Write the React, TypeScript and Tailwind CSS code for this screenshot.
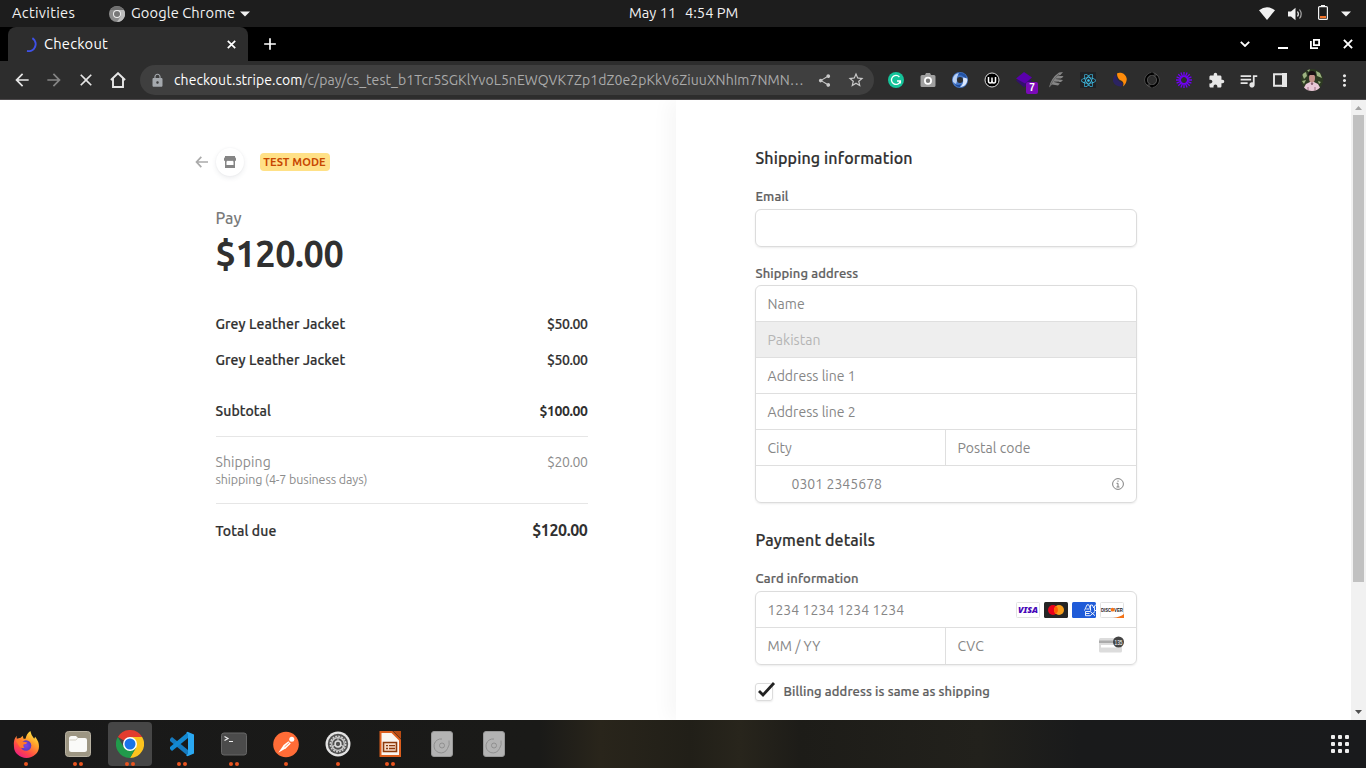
import type { ReactNode } from "react";
import {
  MdAdd,
  MdArrowBack,
  MdArrowForward,
  MdClose,
  MdExtension,
  MdLock,
  MdMoreVert,
  MdQueueMusic,
  MdShare,
  MdStarBorder,
} from "react-icons/md";
import { FaReact } from "react-icons/fa";

/* A single line of text that never wraps. */
function Line({ className = "", children }: { className?: string; children: string }) {
  return <span className={`block shrink-0 whitespace-pre ${className}`}>{children}</span>;
}

function SystemBar() {
  return (
    <header className="flex h-[27px] shrink-0 items-center bg-[#1d1d1d] text-[14.67px] leading-[25px] text-[#f2f2f2]">
      <Line className="ml-3 h-[27px] w-[63px] tracking-[.3px]">Activities</Line>
      <svg className="ml-[34px]" width="16" height="16" viewBox="0 0 16 16">
        <circle cx="8" cy="8" r="8" fill="#8b8b8b" />
        <path d="M8 4h7A8 8 0 0 1 8 16l4-6z" fill="#bdbdbd" />
        <path d="M1.3 4A8 8 0 0 1 15 4H8z" fill="#6f6f6f" />
        <circle cx="8" cy="8" r="4" fill="#eee" />
        <circle cx="8" cy="8" r="3" fill="#777" />
      </svg>
      <Line className="ml-1.5 h-[27px] w-[105px] tracking-[.1px]">Google Chrome</Line>
      <svg className="ml-1" width="10" height="6" viewBox="0 0 10 6"><path d="M0 .5h10L5 5.5z" fill="#f2f2f2" /></svg>
      <div className="ml-[379px] flex h-[27px]">
        <Line className="w-[56px]">May 11</Line>
        <Line className="w-[54px]">4:54 PM</Line>
      </div>
      <div className="ml-auto flex items-center pr-[15px]">
        <svg width="16" height="13" viewBox="0 0 16 13"><path d="M0 3.2Q8-2.6 16 3.2L8 13z" fill="#f2f2f2" /></svg>
        <svg className="ml-[13px]" width="16" height="14" viewBox="0 0 16 14">
          <path d="M0 4.5h3L7.5.8v12.4L3 9.5H0z" fill="#f2f2f2" />
          <path d="M9.5 4.5q1.7 2.5 0 5" stroke="#f2f2f2" strokeWidth="1.2" fill="none" />
          <path d="M11.5 2.5q3.4 4.5 0 9" stroke="#a8a8a8" strokeWidth="1.2" fill="none" />
        </svg>
        <svg className="mb-0.5 ml-[13px]" width="12" height="16" viewBox="0 0 12 16">
          <path d="M4 0h4v2H4z" fill="#f2f2f2" />
          <rect x="1.6" y="1.6" width="8.8" height="12.8" rx="1" fill="none" stroke="#f2f2f2" strokeWidth="1.2" />
          <path d="M3 11h6v2.2H3z" fill="#f37329" />
        </svg>
        <svg className="ml-3" width="10" height="6" viewBox="0 0 10 6"><path d="M0 .5h10L5 5.5z" fill="#f2f2f2" /></svg>
      </div>
    </header>
  );
}

function TabStrip() {
  return (
    <div className="flex h-[34px] shrink-0 items-center bg-black pl-2 text-white">
      <div className="flex h-full w-[240px] items-center rounded-t-lg bg-[#2d2d2d] pr-3 text-[14.67px] leading-[34px]">
        <svg className="ml-3.5" width="16" height="16" viewBox="0 0 16 16">
          <path d="M10.4 2.2A7 7 0 0 1 5 14.9" fill="none" stroke="#3f51e8" strokeWidth="2" />
        </svg>
        <Line className="ml-1.5 tracking-[.25px]">Checkout</Line>
        <svg className="ml-auto" width="9" height="9" viewBox="0 0 9 9"><path d="M.8.8l7.400 7.400M8.200.8.8 8.200" fill="none" stroke="#fff" strokeWidth="1.700" /></svg>
      </div>
      <MdAdd className="ml-3" size={20} />
      <svg className="ml-auto" width="10" height="6" viewBox="0 0 10 6"><path d="M.8.8 5 5 9.200.8" fill="none" stroke="#fff" strokeWidth="1.8" /></svg>
      <svg className="mt-2 ml-7" width="10" height="2"><path d="M0 0h10v2H0z" fill="#fff" /></svg>
      <svg className="ml-[22px]" width="10" height="10" viewBox="0 0 10 10">
        <path d="M3.900.9H9.100v5.200H3.900z" fill="none" stroke="#fff" strokeWidth="1.8" />
        <path d="M.9 2v7.100H8" fill="none" stroke="#fff" strokeWidth="1.8" />
      </svg>
      <svg className="mr-[13px] ml-[23px]" width="10" height="10" viewBox="0 0 10 10"><path d="M.9.900l8.200 8.200M9.100.9.9 9.100" fill="none" stroke="#fff" strokeWidth="1.9" /></svg>
    </div>
  );
}

function Cell({ children }: { children: ReactNode }) {
  return <div className="flex h-full w-8 shrink-0 items-center justify-center">{children}</div>;
}

function Extensions() {
  return (
    <>
      <Cell>
        <svg width="16" height="16" viewBox="0 0 16 16">
          <circle cx="8" cy="8" r="8" fill="#15c39a" />
          <path d="M11.4 5A4.500 4.500 0 1 0 12.300 9.200M9 9h3.400v2.500" fill="none" stroke="#fff" strokeWidth="1.3" />
        </svg>
      </Cell>
      <Cell>
        <svg width="16" height="14" viewBox="0 0 16 14">
          <path d="M5 2l1-2h4l1 2h3a1.500 1.500 0 0 1 1.500 1.500v9A1.500 1.500 0 0 1 14 14H2a1.500 1.500 0 0 1-1.500-1.500v-9A1.500 1.500 0 0 1 2 2z" fill="#a0a0a0" />
          <circle cx="8" cy="7.800" r="3.100" fill="#777" stroke="#fff" strokeWidth="1.800" />
        </svg>
      </Cell>
      <Cell>
        <svg width="16" height="16" viewBox="0 0 16 16">
          <circle cx="8" cy="8" r="5.500" fill="none" stroke="#4677c6" strokeWidth="5" />
          <path d="M1 10A7 7 0 0 1 8 1Q4 4 5 9l-1 3z" fill="#b9cff2" />
          <path d="M15 6a7 7 0 0 1-7 9q4-3 3-8l1-3z" fill="#dbe7fb" />
          <path d="M7 .5q7 0 8 6l-3-1q-2-3-6-2z" fill="#2353a5" />
          <path d="M3 12q3 2 6 0l-1 3q-4 0-5-3z" fill="#1c4896" />
        </svg>
      </Cell>
      <Cell>
        <svg width="16" height="16" viewBox="0 0 16 16">
          <circle cx="8" cy="8" r="7" fill="#000" stroke="#ddd" strokeWidth="1" />
          <path d="M4.500 5v4q0 2 1.700 2T8 9V5.500M8 9q0 2 1.800 2t1.700-2V5" fill="none" stroke="#fff" strokeWidth="1.500" />
        </svg>
      </Cell>
      <Cell>
        <div className="relative">
          <svg width="16" height="16" viewBox="0 0 16 16">
            <path d="M0 8.500l8-3 8 3-8 7z" fill="#33106e" />
            <path d="M0 6.500L8 0l8 5.500-7 6z" fill="#5a00ad" />
          </svg>
          <span className="absolute top-2.5 left-2.5 h-3 w-3 rounded-xs bg-[#7b0ab8] text-center font-['Liberation_Sans'] text-[10px] leading-3 font-bold text-white">7</span>
        </div>
      </Cell>
      <Cell>
        <svg width="16" height="16" viewBox="0 0 16 16">
          <path d="M1 15.500Q3 6 11 .5L15 0 12.500 3 9 4 15.500 4 14 6 7.500 7 15 8 13 10 6 10.300 12 11.500 10 13.500 4 12.500z" fill="#858585" />
          <path d="M1.500 15Q5 7 11 2M8 6.500h5M6 9.500h5" fill="none" stroke="#5c5c5c" strokeWidth=".8" />
        </svg>
      </Cell>
      <Cell>
        <div className="flex size-4 items-center justify-center bg-[#202225]"><FaReact size={15} className="text-[#3fc5f0]" /></div>
      </Cell>
      <Cell>
        <svg width="16" height="16" viewBox="0 0 16 16">
          <path d="M4 2Q.5 5 1 9.500 3 14.500 9.500 14.500L11 11Q4 9 4 2z" fill="#2b2362" />
          <path d="M5 1.500q1-1 4-.7Q14 2 14.800 7 14.500 12 11 14.500q1.500-4-1.500-5.700Q5 7 5 1.500z" fill="#ff8c0a" />
        </svg>
      </Cell>
      <Cell>
        <svg width="16" height="16" viewBox="0 0 16 16" fill="none">
          <circle cx="8" cy="8" r="7.200" stroke="#666" strokeWidth=".7" />
          <path d="M3.800 12.200A6 6 0 0 1 8.500 2M12.200 3.800A6 6 0 0 1 7.500 14" stroke="#000" strokeWidth="1.800" />
          <path d="M7.500.5l2 1.500-2 2M8.500 15.500l-2-1.500 2-2" stroke="#000" strokeWidth="1.200" />
          <circle cx="8" cy="8" r="4.600" stroke="#666" strokeWidth=".6" />
        </svg>
      </Cell>
      <Cell>
        <svg width="16" height="16" viewBox="0 0 16 16" fill="none" stroke="#7000f5">
          <path d="M8 0v5M8 11v5M0 8h5M11 8h5M2.300 2.300l3.600 3.600M10.100 10.100l3.600 3.600M2.300 13.700l3.600-3.600M10.100 5.900l3.600-3.600M4.900.6l1.900 4.700M9.200 10.700l1.900 4.700M11.100.6 9.200 5.300M6.800 10.700l-1.900 4.700M.6 4.900l4.700 1.900M10.700 9.200l4.700 1.900M.6 11.100l4.700-1.900M10.700 6.800l4.700-1.900" strokeWidth="1.300" />
          <circle cx="8" cy="8" r="3.800" strokeWidth="1.400" />
        </svg>
      </Cell>
    </>
  );
}

function Avatar() {
  return (
    <svg width="22" height="22" viewBox="0 0 22 22">
      <defs><clipPath id="face"><circle cx="11" cy="11" r="11" /></clipPath></defs>
      <g clipPath="url(#face)">
        <path d="M0 0h22v22H0z" fill="#2d3a22" />
        <path d="M1 5l4-2 1 4-3 3zM15 2l4 2 2 5-5-2zM1 12l4-1-2 4zM17 12l3 1-2 2zM6 1l3-1-1 3z" fill="#9db380" />
        <path d="M1 22l4-7 4-2h4l4 2 4 7z" fill="#e9c8d8" />
        <ellipse cx="11" cy="9" rx="3" ry="4.500" fill="#c4918a" />
        <path d="M7 7q0-5 4-5t4 5l-2-1H9z" fill="#191014" />
        <path d="M10 14l1 2 1-2zM7 18v4M14 18v4" stroke="#9b6c80" />
      </g>
    </svg>
  );
}

function Toolbar() {
  return (
    <div className="flex h-[39px] shrink-0 items-center border-b border-[#4d4a4c] bg-[#2d2d2d] pl-1.5 text-[#e6e6e6]">
      <Cell><MdArrowBack size={20} /></Cell>
      <Cell><MdArrowForward size={20} className="text-[#858585]" /></Cell>
      <Cell><MdClose size={20} /></Cell>
      <Cell>
        <svg width="16" height="16" viewBox="0 0 16 16"><path d="M.9 8 8 1.200 15.100 8M3 6.500v8.500h10V6.500" fill="none" stroke="#e6e6e6" strokeWidth="1.900" /></svg>
      </Cell>
      <div className="ml-1.5 flex h-[30px] w-[734px] items-center rounded-full bg-[#3f3f3f] pr-0.5 pl-2.5 text-[14px] leading-[30px] tracking-[.065px]">
        <MdLock size={15} className="mr-[9px] text-[#a5a9ae]" />
        <Line className="text-white">checkout.stripe.com</Line>
        <Line className="text-[#aaa]">/c/pay/cs_test_b1Tcr5SGKlYvoL5nEWQVK7Zp1dZ0e2pKkV6ZiuuXNhIm7NMN…</Line>
        <div className="ml-auto flex h-full text-[#c9c9c9]">
          <Cell><MdShare size={15} /></Cell>
          <Cell><MdStarBorder size={18} /></Cell>
        </div>
      </div>
      <div className="ml-1.5 flex h-full items-center">
        <Extensions />
        <Cell><MdExtension size={17} /></Cell>
        <Cell><MdQueueMusic size={21} /></Cell>
        <Cell>
          <svg width="14" height="14" viewBox="0 0 14 14"><path d="M1 1.200h12v11.600H1z" fill="none" stroke="#e6e6e6" strokeWidth="1.900" /><path d="M9 0h5v14H9z" fill="#e6e6e6" /></svg>
        </Cell>
        <Cell><Avatar /></Cell>
        <Cell><MdMoreVert size={19} /></Cell>
      </div>
    </div>
  );
}

const strong = "font-medium [-webkit-text-stroke:0.2px]";

function Item({ name, price }: { name: string; price: string }) {
  return (
    <div className={`flex h-9 items-center justify-between ${strong}`}>
      <Line className="tracking-[.1px]">{name}</Line>
      <Line className="tracking-[-.4px]">{price}</Line>
    </div>
  );
}

function Summary() {
  return (
    <section className="w-[675.5px] shrink-0 pt-12 pl-[194.5px] text-[14px] leading-5 text-[#303030]">
      <div className="flex h-7 items-center">
        <svg width="13" height="12" viewBox="0 0 13 12"><path d="M6.300.8 1.500 6l4.800 5.200M1.500 6H13" fill="none" stroke="#aaa" strokeWidth="1.700" /></svg>
        <div className="ml-2 flex size-7 items-center justify-center rounded-full bg-white shadow-[0_2px_5px_rgba(60,66,87,.10),0_0_2px_rgba(60,66,87,.05)]">
          <svg width="12" height="12" viewBox="0 0 12 12">
            <path d="M1 0h10v1L12 2.500V4q0 1-1 1v7H1V5Q0 5 0 4V2.500L1 1z" fill="#858585" />
            <path d="M2.500 5.500Q3.500 5 4 4.500 5 5.500 6 4.500 7 5.500 8 4.500 8.500 5 9.500 5.500V9h-7z" fill="#fff" />
          </svg>
        </div>
        <div className="ml-4 flex h-[18px] w-[70px] items-center justify-center rounded bg-[#ffe187] text-[11px] leading-[18px] font-bold tracking-[.1px] text-[#c84801]">
          <Line>TEST MODE</Line>
        </div>
      </div>
      <div className="ml-[21px] w-[372px] pt-8">
        <Line className="h-5 text-[16px] font-medium text-[#7a7a7a]">Pay</Line>
        <Line className="mt-1.5 h-10 text-[36px] leading-10 font-bold tracking-[-.4px]">$120.00</Line>
        <div className="mt-8">
          <Item name="Grey Leather Jacket" price="$50.00" />
          <Item name="Grey Leather Jacket" price="$50.00" />
        </div>
        <div className="mt-[15px] flex h-11 justify-between border-b border-[#e6e6e6] pt-2">
          <Line className={`tracking-[.1px] ${strong}`}>Subtotal</Line>
          <Line className="font-semibold tracking-[-.4px]">$100.00</Line>
        </div>
        <div className="flex h-[67px] justify-between border-b border-[#e6e6e6] pt-[15px] text-[#8c8c8c]">
          <div>
            <Line className="tracking-[.1px]">Shipping</Line>
            <Line className="-mt-[3px] text-[12.5px] tracking-[-.1px]">shipping (4-7 business days)</Line>
          </div>
          <Line className="tracking-[-.4px]">$20.00</Line>
        </div>
        <div className="flex justify-between pt-[17px]">
          <Line className={`tracking-[.1px] ${strong}`}>Total due</Line>
          <Line className="-mt-px text-[16px] font-semibold tracking-[-.4px]">$120.00</Line>
        </div>
      </div>
    </section>
  );
}

function Field({ text, className = "", children }: { text: string; className?: string; children?: ReactNode }) {
  return (
    <div className={`flex h-9 items-center border-t border-[#dfdfdf] pr-3 ${className}`}>
      <Line className="tracking-[.04px]">{text}</Line>
      {children}
    </div>
  );
}

const box = "overflow-hidden rounded-md border border-[#dcdcdc] shadow-[0_1px_2px_rgba(0,0,0,.08)]";
const heading = "h-5 text-[16px] tracking-[.14px] text-[#303030]";
const label = "text-[13px] tracking-[.11px] text-[#606060]";

function CardBrands() {
  return (
    <div className="ml-auto flex gap-1">
      <svg width="24" height="16" viewBox="0 0 24 16">
        <rect x=".5" y=".5" width="23" height="15" rx="1" fill="#fff" stroke="#e2e2e2" />
        <text x="2" y="11.300" textLength="20" lengthAdjust="spacingAndGlyphs" fontFamily="Noto Sans" fontSize="9.500" fontWeight="900" fontStyle="italic" fill="#4605b8">VISA</text>
      </svg>
      <svg width="24" height="16" viewBox="0 0 24 16">
        <rect width="24" height="16" rx="1.500" fill="#252525" />
        <circle cx="9" cy="8" r="5" fill="#eb001b" /><circle cx="15" cy="8" r="5" fill="#f79e1b" />
        <path d="M12 4a5 5 0 0 1 0 8 5 5 0 0 1 0-8z" fill="#ff5f00" />
      </svg>
      <svg width="24" height="16" viewBox="0 0 24 16">
        <rect width="24" height="16" rx="1.500" fill="#1f5bd8" />
        <path d="M12.500 8.500 15 2.800h1.800l2 5.700M14.300 7h3M18.500 8.500V3h1.800l1.500 3 1.500-3H24M24 8.500h-1.500V5.500M13.500 13.700V9.500h4.700M13.500 13.700h4.700M14 11.500h3.500M18.200 9.500l4.800 4.200M23 9.500l-4.800 4.200" fill="none" stroke="#fff" strokeWidth=".9" />
      </svg>
      <svg width="24" height="16" viewBox="0 0 24 16">
        <rect x=".5" y=".5" width="23" height="15" rx="1" fill="#fff" stroke="#e2e2e2" />
        <path d="M13 16q7-1 11-4v4z" fill="#f47216" />
        <g fontFamily="Liberation Sans" fontSize="5" fontWeight="700" fill="#222">
          <text x="1" y="9.500" textLength="10" lengthAdjust="spacingAndGlyphs">DISC</text>
          <text x="14" y="9.500" textLength="9" lengthAdjust="spacingAndGlyphs">VER</text>
        </g>
        <circle cx="12.500" cy="7.700" r="1.900" fill="#f47216" />
      </svg>
    </div>
  );
}

function CvcIcon() {
  return (
    <svg className="mb-0.5 ml-auto overflow-visible" width="26" height="17" viewBox="0 0 26 17">
      <rect x="1" y="2" width="23" height="14.500" rx="1.500" fill="#dcdcdc" />
      <path d="M1 4.500h23v2.500H1z" fill="#ababab" />
      <path d="M3 9h19v2.500H3z" fill="#fff" />
      <circle cx="20.500" cy="6" r="5.500" fill="#444" />
      <text x="16.500" y="8.500" textLength="8" lengthAdjust="spacingAndGlyphs" fontFamily="Liberation Sans" fontSize="7" fill="#fff">135</text>
    </svg>
  );
}

function CheckoutForm() {
  return (
    <section className="flex-1 pt-12 pl-[79.5px] text-[14px] leading-5 text-[#868686] shadow-[-8px_0_18px_rgba(0,0,0,.035)]">
      <div className="w-[382px]">
        <Line className={`${heading} ${strong} pl-[.5px]`}>Shipping information</Line>
        <Line className={`mt-[18px] h-[23px] pl-[.5px] ${label} ${strong}`}>Email</Line>
        <div className={`h-[38px] ${box}`} />
        <Line className={`mt-4 h-[22px] pl-[.5px] ${label} ${strong}`}>Shipping address</Line>
        <div className={`h-[218px] ${box}`}>
          <div className="-mt-px">
            <Field text="Name" className="border-transparent pl-[11.5px]" />
            <Field text="Pakistan" className="bg-[#eee] pl-[11.5px] text-[#b5b5b5]" />
            <Field text="Address line 1" className="pl-[11.5px]" />
            <Field text="Address line 2" className="pl-[11.5px]" />
            <div className="flex">
              <Field text="City" className="w-[189px] pl-[11.5px]" />
              <Field text="Postal code" className="flex-1 border-l pl-[11.5px]" />
            </div>
            <Field text="0301 2345678" className="pl-[35.5px]">
              <svg className="ml-auto" width="12" height="12" viewBox="0 0 12 12" fill="none" stroke="#808080">
                <circle cx="6" cy="6" r="5.400" />
                <path d="M6 2.500v1.300M4.500 5.300H6V9M4.500 9h3" />
              </svg>
            </Field>
          </div>
        </div>
        <Line className={`mt-[27px] pl-[.5px] ${heading} ${strong}`}>Payment details</Line>
        <Line className={`mt-[18px] h-[23px] pl-[.5px] ${label} ${strong}`}>Card information</Line>
        <div className={`h-[74px] ${box}`}>
          <div className="-mt-px">
            <Field text="1234 1234 1234 1234" className="border-transparent pl-[11.5px]"><CardBrands /></Field>
            <div className="flex">
              <Field text="MM / YY" className="w-[189px] pl-[11.5px]" />
              <Field text="CVC" className="h-[38px] flex-1 border-l pb-0.5 pl-[11.5px]"><CvcIcon /></Field>
            </div>
          </div>
        </div>
        <div className="mt-4 flex h-5 items-center">
          <div className="mt-0.5 size-[18px] rounded-[3px] border border-[#dcdcdc] shadow-[0_1px_2px_rgba(0,0,0,.08)]">
            <svg className="-mt-0.5 ml-0.5 overflow-visible" width="17" height="15" viewBox="0 0 17 15"><path d="M1 9l4 4L16 1" fill="none" stroke="#222" strokeWidth="2.800" /></svg>
          </div>
          <Line className={`ml-[10.5px] ${label} ${strong}`}>Billing address is same as shipping</Line>
        </div>
      </div>
    </section>
  );
}

function Scrollbar() {
  return (
    <div className="flex w-[15px] shrink-0 flex-col items-center bg-[#f1f1f1]">
      <svg width="15" height="15" viewBox="0 0 15 15"><path d="M4 10h7L7.500 6z" fill="#a3a3a3" /></svg>
      <div className="h-[467px] w-[11px] bg-[#c1c1c1]" />
      <svg className="mt-auto" width="15" height="15" viewBox="0 0 15 15"><path d="M4 5h7L7.500 9z" fill="#505050" /></svg>
    </div>
  );
}

function DockItem({ dots = 0, active = false, children }: { dots?: number; active?: boolean; children: ReactNode }) {
  return (
    <div className={`flex h-11 w-11 flex-col items-center rounded ${active ? "bg-[#464646]" : ""}`}>
      <div className="flex h-10 items-center pt-1">{children}</div>
      <div className="flex gap-0.5">
        {dots > 0 && <span className="size-1 rounded-full bg-[#e95420]" />}
        {dots > 1 && <span className="size-1 rounded-full bg-[#e95420]" />}
      </div>
    </div>
  );
}

function Disk() {
  return (
    <svg width="22" height="26" viewBox="0 0 22 26">
      <rect x=".5" y=".5" width="21" height="25" rx="2.500" fill="#b3b3b3" stroke="#989898" />
      <path d="M18 9.500Q19 14 16.500 17.500A7 7 0 1 1 11 8" fill="none" stroke="#8b8b8b" strokeWidth=".9" />
      <circle cx="11" cy="14.500" r="2.500" fill="none" stroke="#8b8b8b" strokeWidth=".9" />
    </svg>
  );
}

function Dock() {
  return (
    <footer className="flex h-12 shrink-0 items-center justify-between bg-[linear-gradient(90deg,#191919_0,#1a1a18_540px,#29251b_600px,#211f18_690px,#28251c_740px,#1d1c18_800px,#22211c_980px,#191a1b_1080px,#191a1c_100%)] pr-[17px] pl-1">
      <div className="flex gap-2">
        <DockItem dots={1}>
          <svg width="26" height="27" viewBox="0 0 27 28">
            <defs>
              <linearGradient id="ff" x1=".85" y1="0" x2=".2" y2="1"><stop stopColor="#fff44f" /><stop offset=".35" stopColor="#ffa42b" /><stop offset=".7" stopColor="#ff4a45" /><stop offset="1" stopColor="#e9168c" /></linearGradient>
              <radialGradient id="fp"><stop stopColor="#7a45ec" /><stop offset="1" stopColor="#593bbf" /></radialGradient>
            </defs>
            <path d="M4 5q-.5 2 0 3l4-1 2-2 1 3 2 0q1-5 5-8 1 5 4 8l1-2q4 5 4 10a13 12 0 0 1-26 0Q0 9 4 5z" fill="url(#ff)" />
            <circle cx="13.500" cy="15" r="5.500" fill="url(#fp)" />
            <path d="M3 10q4-3 7 1l5 1q-1 2-4 2-1 2 1 3-4 2-6-2z" fill="#ff7a2b" />
          </svg>
        </DockItem>
        <DockItem dots={2}>
          <svg width="26" height="26" viewBox="0 0 26 26">
            <rect x=".5" y=".5" width="25" height="25" rx="3" fill="#9d9683" stroke="#b8b2a2" />
            <path d="M4 7.500Q4 5 6.500 5H11l2 2h7q2 0 2 2v9.500q0 2.500-2.500 2.500h-13Q4 21 4 18.500z" fill="#fafaf8" />
            <path d="M4.500 9h6l2-1.500" fill="none" stroke="#d2cec2" />
          </svg>
        </DockItem>
        <DockItem dots={2} active>
          <svg width="28" height="28" viewBox="0 0 48 48">
            <path d="M24 24 3.200 12A24 24 0 0 1 44.800 12z" fill="#e33b2e" />
            <path d="M24 24V12h20.800A24 24 0 0 1 24 48l10.400-18z" fill="#fcc31e" />
            <path d="M24 24l10.400 6L24 48A24 24 0 0 1 3.200 12l10.400 18z" fill="#219b4b" />
            <circle cx="24" cy="24" r="12" fill="#fff" /><circle cx="24" cy="24" r="9.400" fill="#1a73e8" />
          </svg>
        </DockItem>
        <DockItem dots={2}>
          <svg width="26" height="26" viewBox="0 0 26 26">
            <path d="M1 8l2-2 16 13v6L1 10z" fill="#167abf" />
            <path d="M1 18l2 2L19 7V1L1 16z" fill="#1389d2" />
            <path d="M18.500.8 25 3.500v19l-6.500 2.700-1.500-1 2-1.200V3l-2-1z" fill="#2aa8f2" />
          </svg>
        </DockItem>
        <DockItem dots={2}>
          <svg width="26" height="24" viewBox="0 0 26 24">
            <rect x=".5" y="1" width="25" height="22" rx="2.500" fill="#4b4b4b" stroke="#666" />
            <path d="M3.500 4.500l3.500 2-3.500 2M8 9.500h4" fill="none" stroke="#eee" strokeWidth="1.200" />
          </svg>
        </DockItem>
        <DockItem dots={1}>
          <svg width="26" height="27" viewBox="0 0 27 27">
            <circle cx="13.500" cy="13.500" r="13.300" fill="#ff6c37" />
            <circle cx="19.500" cy="8" r="2.600" fill="#fff" />
            <path d="M5.500 22l5.500-8 5-4 2.500 2.500-5 5z" fill="#fff" />
            <path d="M12 16l5-4.500" stroke="#ff6c37" strokeWidth=".8" />
          </svg>
        </DockItem>
        <DockItem dots={1}>
          <svg width="26" height="26" viewBox="0 0 26 26">
            <circle cx="13" cy="13" r="12.500" fill="#e4e4e4" />
            <circle cx="13" cy="13" r="10.200" fill="#505050" />
            <circle cx="13" cy="13" r="7.700" fill="none" stroke="#ccc" strokeWidth="1.500" strokeDasharray="2 1.023" />
            <circle cx="13" cy="13" r="6.300" fill="none" stroke="#ccc" strokeWidth="1.300" />
            <circle cx="13" cy="13" r="2.900" fill="none" stroke="#ddd" strokeWidth="1.500" />
            <path d="M13 6v4M7 16l3-2M19 16l-3-2" stroke="#ccc" strokeWidth="1.100" />
          </svg>
        </DockItem>
        <DockItem dots={2}>
          <svg width="22" height="26" viewBox="0 0 22 26">
            <path d="M1.500 1H13l8 8v16H1.500z" fill="#faf5f0" stroke="#dc5e1d" strokeWidth="2" />
            <path d="M14 0h8v8z" fill="#b94c14" />
            <path d="M4.500 11.500h13v9h-13z" fill="#f7ddca" stroke="#8c3a0c" strokeWidth="1.600" />
            <path d="M7 14.700h2M10 14.700h6M7 17.500h2M10 17.500h6" stroke="#8c3a0c" strokeWidth="1.300" />
          </svg>
        </DockItem>
        <DockItem><Disk /></DockItem>
        <DockItem><Disk /></DockItem>
      </div>
      <div className="grid grid-cols-3 gap-[3px]">
        {Array.from({ length: 9 }, (_, i) => <span key={i} className="size-1 rounded-[1px] bg-[#eee]" />)}
      </div>
    </footer>
  );
}

export default function App() {
  return (
    <div className="flex h-[768px] w-[1366px] flex-col overflow-hidden bg-white font-['Ubuntu','Noto_Sans',sans-serif]">
      <SystemBar />
      <TabStrip />
      <Toolbar />
      <main className="flex h-[620px] shrink-0 overflow-hidden">
        <Summary />
        <CheckoutForm />
        <Scrollbar />
      </main>
      <Dock />
    </div>
  );
}
